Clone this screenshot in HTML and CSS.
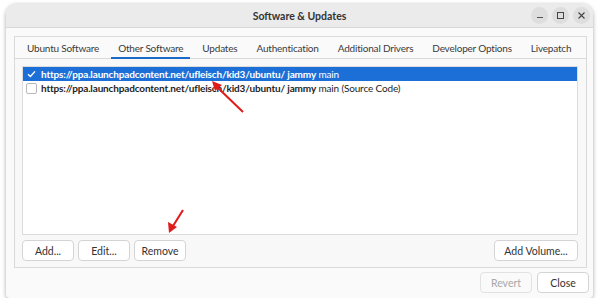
FILE: index.html
```html
<!DOCTYPE html>
<html lang="en">
<head>
    <meta charset="UTF-8">
    <title>Software &amp; Updates</title>
    <link rel="stylesheet" href="styles.css">
</head>
<body>
    <div class="window">
        <div class="titlebar">
            <div></div>
            <div class="title">Software &amp; Updates</div>
            <div class="controls">
                <span class="ctl"><span class="dash"></span></span>
                <span class="ctl"><span class="sq"></span></span>
                <span class="ctl">
                    <svg width="7" height="7" viewBox="0 0 7 7"><path d="M0.5 0.5 L6.5 6.5 M6.5 0.5 L0.5 6.5" stroke="#444" stroke-width="1.1"/></svg>
                </span>
            </div>
        </div>
        <div class="content">
            <div class="frame">
                <div class="tabs">
                    <div class="tab">Ubuntu Software</div>
                    <div class="tab active">Other Software</div>
                    <div class="tab">Updates</div>
                    <div class="tab">Authentication</div>
                    <div class="tab">Additional Drivers</div>
                    <div class="tab">Developer Options</div>
                    <div class="tab">Livepatch</div>
                </div>
                <div class="page">
                    <div class="list">
                        <div class="row selected">
                            <span class="check on">
                                <svg width="9" height="8" viewBox="0 0 9 8"><path d="M1 4.2 L3.4 6.4 L8 1.4" fill="none" stroke="#fff" stroke-width="1.4"/></svg>
                            </span>
                            <span><b>https://ppa.launchpadcontent.net/ufleisch/kid3/ubuntu/ jammy</b> main</span>
                        </div>
                        <div class="row">
                            <span class="check"></span>
                            <span><b>https://ppa.launchpadcontent.net/ufleisch/kid3/ubuntu/ jammy</b> main (Source Code)</span>
                        </div>
                    </div>
                    <div class="actions">
                        <button class="btn">Add...</button>
                        <button class="btn">Edit...</button>
                        <button class="btn">Remove</button>
                        <button class="btn wide push">Add Volume...</button>
                    </div>
                </div>
            </div>
            <div class="footer">
                <button class="btn disabled">Revert</button>
                <button class="btn">Close</button>
            </div>
        </div>
        <svg class="arrows" width="600" height="304" viewBox="0 0 600 304">
            <line x1="243" y1="112" x2="217" y2="87" stroke="#e01b1b" stroke-width="2"/>
            <path d="M212 81 L222 85 L215 91 Z" fill="#e01b1b"/>
            <line x1="183" y1="210" x2="173" y2="226" stroke="#e01b1b" stroke-width="2"/>
            <path d="M169 233 L168 222 L177 227 Z" fill="#e01b1b"/>
        </svg>
    </div>
</body>
</html>
```

FILE: styles.css
```css
body {
    margin: 0;
    background: #ffffff;
    font-family: Lato, "Noto Sans", sans-serif;
    font-size: 10px;
    color: #2e2e2e;
}

.window {
    position: relative;
    margin: 4px 0 0 6px;
    width: 587px;
    height: 294px;
    background: #fafafa;
    border-radius: 11px 11px 4px 4px;
    box-shadow: 0 1px 4px rgba(0,0,0,0.35);
    display: flex;
    flex-direction: column;
}

.titlebar {
    height: 23px;
    background: #ebebeb;
    border-bottom: 1px solid #d8d8d8;
    border-radius: 11px 11px 0 0;
    display: grid;
    grid-template-columns: 1fr auto 1fr;
    align-items: center;
}

.title {
    font-weight: bold;
    font-size: 10.5px;
    color: #333;
}

.controls {
    display: flex;
    justify-content: flex-end;
    gap: 4px;
    padding-right: 3px;
}

.ctl {
    width: 17px;
    height: 17px;
    border-radius: 50%;
    background: #dedede;
    display: flex;
    align-items: center;
    justify-content: center;
}

.ctl .dash {
    width: 6px;
    height: 1px;
    background: #555;
    margin-top: 3px;
}

.ctl .sq {
    width: 5px;
    height: 5px;
    border: 1px solid #444;
}

.content {
    flex: 1;
    padding: 8px 6px 0 8px;
    display: flex;
    flex-direction: column;
}

.frame {
    height: 230px;
    border: 1px solid #dadada;
    background: #f8f8f8;
    display: flex;
    flex-direction: column;
}

.tabs {
    height: 21px;
    display: flex;
    align-items: stretch;
    padding-left: 5px;
    background: #fafafa;
    border-bottom: 1px solid #dadada;
}

.tab {
    padding: 0 7px;
    margin-right: 5px;
    display: flex;
    align-items: center;
    white-space: nowrap;
    font-size: 10px;
    letter-spacing: -0.2px;
    color: #3a3a3a;
    border-bottom: 2px solid transparent;
    margin-bottom: -1px;
    padding-top: 1px;
}

.tab.active {
    border-bottom-color: #1b6ac9;
}

.page {
    flex: 1;
    padding: 7px 8px 6px 7px;
    display: flex;
    flex-direction: column;
    gap: 5px;
}

.list {
    flex: 1;
    background: #ffffff;
    border: 1px solid #dcdcdc;
}

.row {
    height: 14px;
    display: flex;
    align-items: center;
    gap: 4px;
    padding-left: 3px;
    color: #1e1e1e;
    white-space: nowrap;
    letter-spacing: -0.15px;
}

.row.selected {
    background: #1d6fd8;
    color: #ffffff;
}

.check {
    width: 9px;
    height: 9px;
    border: 1px solid #b8b8b8;
    border-radius: 2px;
    background: #fff;
    display: flex;
    align-items: center;
    justify-content: center;
}

.check.on {
    border-color: transparent;
    background: transparent;
}

.actions {
    display: flex;
    gap: 4px;
}

.btn {
    height: 21px;
    width: 52px;
    padding: 0;
    font-family: inherit;
    font-size: 10.5px;
    color: #333;
    background: #ffffff;
    border: 1px solid #d4d4d4;
    border-radius: 4px;
}

.btn.wide {
    width: 84px;
}

.push {
    margin-left: auto;
}

.btn.disabled {
    color: #a8a8a8;
    border-color: #e2e2e2;
    background: #fafafa;
}

.footer {
    display: flex;
    justify-content: flex-end;
    gap: 5px;
    padding-top: 4px;
    margin-right: -2px;
}

.arrows {
    position: absolute;
    left: -6px;
    top: -4px;
    pointer-events: none;
}
```
